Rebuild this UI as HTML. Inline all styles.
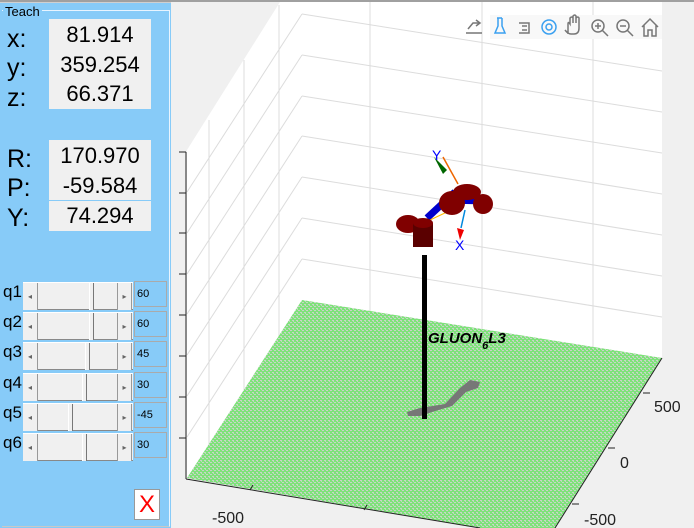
<!DOCTYPE html>
<html><head><style>
body{margin:0;width:694px;height:528px;overflow:hidden;background:#f0f0f0;font-family:"Liberation Sans",sans-serif;position:relative}
#panel{position:absolute;left:0;top:0;width:171px;height:528px;background:#87cbf8}
.abs{position:absolute}
.lbl{position:absolute;font-size:25px;color:#000;left:7px;line-height:28px}
.box{position:absolute;background:#f0f0f0}
.num{position:absolute;left:0;width:102px;text-align:center;font-size:22px;line-height:29px}
.row{position:absolute;left:0;height:30px;width:171px}
.q{position:absolute;left:3px;top:1px;font-size:17px}
.sl{position:absolute;left:23px;top:1px;width:110px;height:28px;background:#f0f0f0;border-top:1px solid #fff;border-bottom:1px solid #888;box-sizing:border-box}
.ab{position:absolute;top:0;width:15px;height:27px;border-right:1px solid #999;box-sizing:border-box;background:#f0f0f0;font-size:8px;color:#666;text-align:center;line-height:27px}
.th{position:absolute;top:0;width:5px;height:27px;border-left:1px solid #fff;border-right:1px solid #777;box-sizing:border-box;background:#f0f0f0}
.vb{position:absolute;left:134px;top:0;width:33px;height:26px;border:1px solid #aaa;box-sizing:border-box;font-size:11px;line-height:24px;padding-left:2px}
</style></head><body>
<div id="panel">
 <div class="abs" style="left:0;top:2px;width:171px;height:1px;background:#d0d0d0"></div>
 <div class="abs" style="left:2px;top:10px;width:167px;height:515px;border:1px solid #e8f4ff;border-bottom-color:#c8c8c8;border-left:none"></div>
 <div class="abs" style="left:3px;top:4px;background:#87cbf8;font-size:13px;padding:0 2px">Teach</div>
 <div class="box" style="left:49px;top:19px;width:102px;height:90px">
  <div class="num" style="top:1px">81.914</div><div class="num" style="top:31px">359.254</div><div class="num" style="top:60px">66.371</div></div>
 <div class="lbl" style="top:25px">x:</div><div class="lbl" style="top:54px">y:</div><div class="lbl" style="top:84px">z:</div>
 <div class="box" style="left:49px;top:140px;width:102px;height:91px">
  <div class="num" style="top:1px">170.970</div><div class="num" style="top:31px">-59.584</div>
  <div class="abs" style="left:0;top:60px;width:102px;height:1px;background:#87cbf8"></div>
  <div class="num" style="top:61px">74.294</div></div>
 <div class="lbl" style="top:145px">R:</div><div class="lbl" style="top:174px">P:</div><div class="lbl" style="top:204px">Y:</div>

 <div class="row" style="top:281px"><div class="q">q1</div><div class="sl"><div class="ab" style="left:0">◂</div><div class="th" style="left:66px"></div><div class="ab" style="left:94px;border-left:1px solid #999">▸</div></div><div class="vb">60</div></div>
 <div class="row" style="top:311px"><div class="q">q2</div><div class="sl"><div class="ab" style="left:0">◂</div><div class="th" style="left:66px"></div><div class="ab" style="left:94px;border-left:1px solid #999">▸</div></div><div class="vb">60</div></div>
 <div class="row" style="top:341px"><div class="q">q3</div><div class="sl"><div class="ab" style="left:0">◂</div><div class="th" style="left:62px"></div><div class="ab" style="left:94px;border-left:1px solid #999">▸</div></div><div class="vb">45</div></div>
 <div class="row" style="top:372px"><div class="q">q4</div><div class="sl"><div class="ab" style="left:0">◂</div><div class="th" style="left:59px"></div><div class="ab" style="left:94px;border-left:1px solid #999">▸</div></div><div class="vb">30</div></div>
 <div class="row" style="top:402px"><div class="q">q5</div><div class="sl"><div class="ab" style="left:0">◂</div><div class="th" style="left:45px"></div><div class="ab" style="left:94px;border-left:1px solid #999">▸</div></div><div class="vb">-45</div></div>
 <div class="row" style="top:432px"><div class="q">q6</div><div class="sl"><div class="ab" style="left:0">◂</div><div class="th" style="left:59px"></div><div class="ab" style="left:94px;border-left:1px solid #999">▸</div></div><div class="vb">30</div></div>
 <div class="abs" style="left:134px;top:489px;width:24px;height:29px;background:#fff;border:1px solid #999;color:#f00;font-size:24px;text-align:center;line-height:29px">X</div>
</div>
<svg class="abs" style="left:0;top:0" width="694" height="528">
 <defs><pattern id="g" width="4" height="4" patternUnits="userSpaceOnUse"><rect width="4" height="4" fill="#7ee27a"/><rect x="0" y="0" width="2" height="1" fill="#c8d4c8"/><rect x="2" y="2" width="2" height="1" fill="#c8d4c8"/><rect x="1" y="1" width="1" height="1" fill="#b8e0b4"/></pattern></defs>
 <rect x="0" y="0" width="694" height="2" fill="#a0a0a0"/>
 <polygon points="187,150 280,2 662,2 662,358 302,300 187,478" fill="#fff"/>
 <g stroke="#dcdcdc" stroke-width="1" fill="none">
  <line x1="370" y1="2" x2="370" y2="312"/><line x1="482" y1="2" x2="482" y2="330"/><line x1="593" y1="2" x2="593" y2="347"/>
  <line x1="209" y1="120" x2="209" y2="445"/><line x1="244" y1="60" x2="244" y2="390"/><line x1="279" y1="5" x2="279" y2="336"/>
  <line x1="302" y1="14" x2="662" y2="71"/><line x1="302" y1="55" x2="662" y2="112"/><line x1="302" y1="96" x2="662" y2="153"/><line x1="302" y1="136" x2="662" y2="194"/><line x1="302" y1="177" x2="662" y2="235"/><line x1="302" y1="218" x2="662" y2="276"/><line x1="302" y1="259" x2="662" y2="317"/>
  <line x1="302" y1="14" x2="187" y2="192"/><line x1="302" y1="55" x2="187" y2="233"/><line x1="302" y1="96" x2="187" y2="274"/><line x1="302" y1="136" x2="187" y2="314"/><line x1="302" y1="177" x2="187" y2="355"/><line x1="302" y1="218" x2="187" y2="396"/><line x1="302" y1="259" x2="187" y2="437"/>
 </g>
 <polygon points="187,478 302,300 662,358 555,528 480,528" fill="url(#g)"/>
 <g stroke="#222" stroke-width="1"><line x1="186" y1="152" x2="186" y2="479"/><line x1="186" y1="479" x2="480" y2="528"/><line x1="662" y1="358" x2="555" y2="528"/>
 <line x1="179" y1="152" x2="186" y2="152"/><line x1="179" y1="193" x2="186" y2="193"/><line x1="179" y1="233" x2="186" y2="233"/><line x1="179" y1="274" x2="186" y2="274"/><line x1="179" y1="315" x2="186" y2="315"/><line x1="179" y1="356" x2="186" y2="356"/><line x1="179" y1="397" x2="186" y2="397"/><line x1="179" y1="438" x2="186" y2="438"/>
 <line x1="250" y1="490" x2="253" y2="485"/><line x1="364" y1="510" x2="367" y2="505"/><line x1="643" y1="393" x2="650" y2="393"/><line x1="608" y1="448" x2="615" y2="448"/><line x1="572" y1="504" x2="579" y2="504"/></g>
 <g font-size="16" fill="#222"><text x="212" y="523">-500</text><text x="654" y="412">500</text><text x="620" y="468">0</text><text x="584" y="525">-500</text></g>
 <path d="M407,412 L420,408 L445,404 L460,388 L470,380 L480,382 L478,388 L466,392 L452,406 L432,412 L420,416 L408,416 Z" fill="#777"/>
 <rect x="422" y="255" width="5" height="164" fill="#000"/>
 <text x="428" y="343" font-size="15" font-weight="bold" font-style="italic">GLUON<tspan font-size="11" dy="6">6</tspan><tspan dy="-6">L3</tspan></text>
 <line x1="427" y1="218" x2="455" y2="192" stroke="#00c" stroke-width="7"/>
 <line x1="455" y1="200" x2="480" y2="200" stroke="#00c" stroke-width="8"/>
 <line x1="430" y1="220" x2="447" y2="212" stroke="#fb0" stroke-width="1"/>
 <line x1="443" y1="157" x2="458" y2="184" stroke="#e60" stroke-width="1.5"/>
 <polygon points="434,157 447,170 443,174" fill="#060"/>
 <line x1="465" y1="210" x2="461" y2="228" stroke="#08d" stroke-width="1.5"/>
 <polygon points="457,228 464,230 460,240" fill="#e00"/>
 <text x="432" y="160" font-size="14" fill="#00f">Y</text><text x="455" y="250" font-size="14" fill="#00f">X</text>
 <g fill="#800000"><ellipse cx="408" cy="224" rx="12" ry="9"/><rect x="413" y="223" width="20" height="24" fill="#5a0000"/><ellipse cx="423" cy="223" rx="10" ry="5"/>
 <ellipse cx="452" cy="203" rx="13" ry="12"/><ellipse cx="467" cy="192" rx="14" ry="8"/><ellipse cx="483" cy="204" rx="10" ry="10"/></g>
 <rect x="490" y="15" width="172" height="24" fill="#f8f8f8"/>
 <g fill="none" stroke="#777" stroke-width="1.5">
  <path d="M466,33 h16 M468,29 l5,-6 l6,0 M476,20 l4,3 -4,3"/>
  <path d="M519,23 h10 v10 h-10 M522,26 h5 M522,30 h5"/>
  <path d="M568,34 v-10 q0,-3 2,0 v-6 q2,-2 3,0 v5 v-7 q2,-2 3,0 v7 v-5 q2,-2 3,0 v10 q0,6 -5,6 h-3 q-3,0 -6,-4"/>
  <circle cx="598" cy="26" r="6"/><path d="M602,30 l6,6 M595,26 h6 M598,23 v6"/>
  <circle cx="623" cy="26" r="6"/><path d="M627,30 l6,6 M620,26 h6"/>
  <path d="M642,27 l8,-8 8,8 M644,25 v11 h4 v-6 h4 v6 h4 v-11"/>
 </g>
 <g fill="none" stroke="#3aa0f0" stroke-width="1.5"><path d="M497,18 h5 M498,18 v8 l-3,7 h10 l-3,-7 v-8"/><circle cx="549" cy="27" r="7"/><circle cx="549" cy="27" r="3"/></g>
</svg>
</body></html>
